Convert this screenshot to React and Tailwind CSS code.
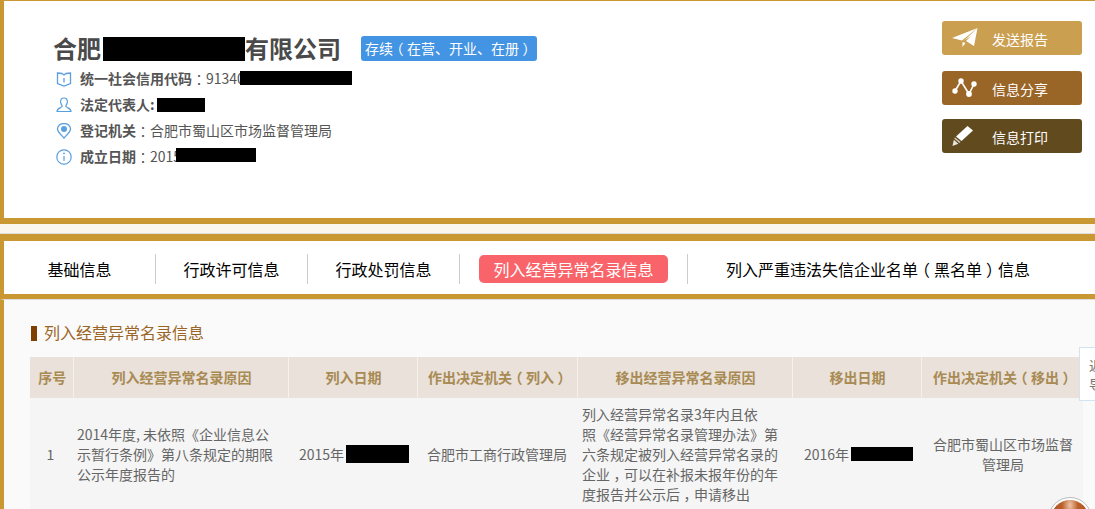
const infoRows = [
  { icon: "book", label: "统一社会信用代码", value: "91340", black: "w-[112px] h-[14px] -ml-[5px] mb-[2px]" },
  { icon: "user", label: "法定代表人:", value: "", black: "w-[48px] h-[14px] ml-[2px]" },
  { icon: "pin", label: "登记机关", value: "合肥市蜀山区市场监督管理局" },
  { icon: "info", label: "成立日期", value: "2015", black: "w-[80px] h-[14px] -ml-[5px] mb-[4px]" },
];

const buttons = [
  { text: "发送报告", color: "bg-[#cb9f50]", icon: "send", margin: "mt-[20px]" },
  { text: "信息分享", color: "bg-[#9a6627]", icon: "share", margin: "mt-[16px]" },
  { text: "信息打印", color: "bg-[#614a1e]", icon: "pencil", margin: "mt-[14px]" },
];

function RowIcon({ name }) {
  if (name === "book") {
    return (
      <svg width="16" height="16" viewBox="0 0 16 16" fill="none" stroke="#5a9fe0" strokeWidth="1.3">
        <path d="M1.5 2 L6 2.5 L8 4 L10 2.5 L14.5 2 V12.5 L8 15 L1.5 12.5 Z" />
        <path d="M8 7 V11.5" />
      </svg>
    );
  }
  if (name === "user") {
    return (
      <svg width="16" height="16" viewBox="0 0 16 16" fill="none" stroke="#5a9fe0" strokeWidth="1.2">
        <path d="M8 1 C5.6 1 4.6 2.8 4.6 4.8 C4.6 6.8 5.8 8 6.2 9 C6.2 10.6 1 11 1 14.5 H15 C15 11 9.8 10.6 9.8 9 C10.2 8 11.4 6.8 11.4 4.8 C11.4 2.8 10.4 1 8 1 Z" />
      </svg>
    );
  }
  if (name === "pin") {
    return (
      <svg width="16" height="16" viewBox="0 0 16 16" fill="none" stroke="#5a9fe0" strokeWidth="1.3">
        <path d="M8 15 C5 11.5 1.5 9 1.5 6 A6.5 5.5 0 0 1 14.5 6 C14.5 9 11 11.5 8 15 Z" />
        <circle cx="8" cy="6" r="3" fill="#5a9fe0" stroke="none" />
      </svg>
    );
  }
  return (
    <svg width="16" height="16" viewBox="0 0 16 16" fill="none" stroke="#5a9fe0" strokeWidth="1.2">
      <circle cx="8" cy="8" r="7.2" />
      <path d="M8 7 V12" />
      <circle cx="8" cy="4.4" r="0.9" fill="#5a9fe0" stroke="none" />
    </svg>
  );
}

function ButtonIcon({ name }) {
  if (name === "send") {
    return (
      <svg width="26" height="20" viewBox="0 0 26 20" fill="white">
        <path d="M0 10 L25.5 0 L10 12.5 Z" />
        <path d="M25.5 0 L22 18 L14 13 L19 8 L12 12.8 Z" />
        <path d="M10.5 14 L13.5 15 L10.5 19 Z" />
      </svg>
    );
  }
  if (name === "share") {
    return (
      <svg width="25" height="20" viewBox="0 0 25 20" fill="white" stroke="white">
        <path d="M3 13 L9 3 L17 16 L22 6" fill="none" strokeWidth="1.6" />
        <circle cx="3" cy="13" r="2.7" stroke="none" />
        <circle cx="9" cy="3" r="2.7" stroke="none" />
        <circle cx="17" cy="16" r="2.9" stroke="none" />
        <circle cx="22" cy="6" r="2.7" stroke="none" />
      </svg>
    );
  }
  return (
    <svg width="22" height="20" viewBox="0 0 22 20" fill="white">
      <path d="M15.5 0 L21 4.5 L9.5 15 L4 10.5 Z" />
      <path d="M3 11.5 L8.5 16 L7.5 17 L2.2 12.5 Z" opacity="0.75" />
      <path d="M1.8 13.7 L6.4 17.8 L0.5 20 Z" opacity="0.85" />
    </svg>
  );
}

function Black({ className }) {
  return <span className={"inline-block bg-black " + className}></span>;
}

// full-width punctuation sits in the middle of its cell in the reference
function Punct({ children }) {
  return <span className="inline-block w-[1em] text-center [font-feature-settings:'halt']">{children}</span>;
}

const thClass = "border-r border-[#f5f2ec] font-bold text-[#a88a52] text-[14px] text-center pl-[2px]";
const tdClass = "text-[#666666] text-[14px] leading-[20px] pt-[6px] pb-[8px]";

export default function App() {
  return (
    <div className="h-screen overflow-hidden bg-[#faf6ee] relative font-['Noto_Sans_CJK_SC','Liberation_Sans',sans-serif]">
      <div className="h-[224px] bg-white border-t border-l-4 border-b-[6px] border-[#c99833] flex justify-between">
        <div className="pl-[49px] pt-[32px]">
          <div className="flex items-center h-[32px]">
            <h1 className="text-[24px] leading-[32px] font-bold text-[#4a4a4a] flex items-center pb-[2px]">
              合肥<Black className="w-[142px] h-[24px] ml-[2px] mt-[2px]" />有限公司
            </h1>
            <span className="ml-[20px] mb-[1px] w-[176px] h-[25px] rounded-[3px] bg-[#4394e3] text-white text-[14px] leading-[25px] text-center">
              存续<Punct>（</Punct>在营、开业、在册<Punct>）</Punct>
            </span>
          </div>
          <div className="mt-[1px] pl-px">
            {infoRows.map((r) => (
              <div key={r.label} className="flex items-center h-[26px] text-[14px] text-[#555555]">
                <span className="w-[26px] pl-[2px] flex">
                  <RowIcon name={r.icon} />
                </span>
                <span className="pb-[2px]">
                  <span className="font-bold">{r.label}</span>
                  {r.icon !== "user" && <Punct>：</Punct>}
                  <span>{r.value}</span>
                </span>
                {r.black && <Black className={r.black} />}
              </div>
            ))}
          </div>
        </div>
        <div className="w-[140px] mr-[13px] flex flex-col">
          {buttons.map((b) => (
            <div key={b.text} className={"h-[34px] rounded-[3px] flex items-center text-white text-[14px] pl-[10px] " + b.color + " " + b.margin}>
              <span className="w-[40px] flex">
                <ButtonIcon name={b.icon} />
              </span>
              <span className="pt-[2px]">{b.text}</span>
            </div>
          ))}
        </div>
      </div>

      <div className="h-[10px] border-b border-[#dddddd]"></div>

      <div className="h-[65px] bg-white border-t-[7px] border-l-4 border-b-[5px] border-[#c99833] pt-[3px] flex items-center text-[16px] text-black">
        <div className="w-[151px] text-center">基础信息</div>
        <div className="w-px h-[30px] bg-[#cccccc]"></div>
        <div className="w-[151px] text-center">行政许可信息</div>
        <div className="w-px h-[30px] bg-[#cccccc]"></div>
        <div className="w-[151px] text-center">行政处罚信息</div>
        <div className="w-px h-[30px] bg-[#cccccc]"></div>
        <div className="ml-[19px] w-[189px] h-[28px] leading-[28px] rounded-[5px] bg-[#f9646a] text-white text-center">
          列入经营异常名录信息
        </div>
        <div className="ml-[19px] w-px h-[30px] bg-[#cccccc]"></div>
        <div className="ml-[38px]">列入严重违法失信企业名单<Punct>（</Punct>黑名单<Punct>）</Punct>信息</div>
      </div>

      <div className="h-[210px] bg-[#fafafa] border-t border-[#dddddd] border-l-4 border-l-[#c99833] pl-[26px] pr-[12px] pt-[24px]">
        <div className="flex items-center h-[18px] text-[16px] text-[#9a6627]">
          <span className="ml-px w-[6px] h-[15px] bg-[#7f3f00] mr-[7px]"></span>
          <span className="pb-[2px]">列入经营异常名录信息</span>
        </div>
        <table className="mt-[15px] w-[1053px] table-fixed border-collapse">
          <colgroup>
            <col className="w-[43px]" />
            <col className="w-[215px]" />
            <col className="w-[129px]" />
            <col className="w-[160px]" />
            <col className="w-[215px]" />
            <col className="w-[129px]" />
            <col className="w-[162px]" />
          </colgroup>
          <thead>
            <tr className="h-[41px] bg-[#e9e1da]">
              <th className={thClass}>序号</th>
              <th className={thClass}>列入经营异常名录原因</th>
              <th className={thClass}>列入日期</th>
              <th className={thClass}>作出决定机关<Punct>（</Punct>列入<Punct>）</Punct></th>
              <th className={thClass}>移出经营异常名录原因</th>
              <th className={thClass}>移出日期</th>
              <th className={thClass}>作出决定机关<Punct>（</Punct>移出<Punct>）</Punct></th>
            </tr>
          </thead>
          <tbody>
            <tr className="bg-[#f5f5f5]">
              <td className={tdClass + " text-center pr-[2px]"}>1</td>
              <td className={tdClass + " pl-[4px] pr-[8px]"}>
                2014年度, 未依照《企业信息公示暂行条例》第八条规定的期限公示年度报告的
              </td>
              <td className={tdClass + " pl-[11px] whitespace-nowrap"}>
                2015年<Black className="w-[63px] h-[18px] ml-[2px] align-[-3px]" />
              </td>
              <td className={tdClass + " text-center"}>合肥市工商行政管理局</td>
              <td className={tdClass + " pl-[5px] whitespace-nowrap"}>
                列入经营异常名录3年内且依<br />
                照《经营异常名录管理办法》第<br />
                六条规定被列入经营异常名录的<br />
                企业<Punct>，</Punct>可以在补报未报年份的年<br />
                度报告并公示后<Punct>，</Punct>申请移出
              </td>
              <td className={tdClass + " pl-[12px] whitespace-nowrap"}>
                2016年<Black className="w-[62px] h-[14px] ml-[2px] align-[-1px]" />
              </td>
              <td className={tdClass + " text-center pl-[11px] pr-[9px]"}>合肥市蜀山区市场监督管理局</td>
            </tr>
          </tbody>
        </table>
      </div>

      <div className="absolute left-[1079px] top-[347px] w-[30px] h-[54px] bg-white border border-[#d5e3ef] pl-[9px] pt-[8px] text-[14px] leading-[19px] text-[#777777]">
        返<br />导
      </div>
      <div className="absolute left-[1048px] top-[497px] w-[44px] h-[44px] rounded-full bg-white border border-[#bbbbbb] p-[2px]">
        <div className="w-full h-full rounded-full bg-[radial-gradient(ellipse_at_50%_14%,#eec4a8_0%,#bb5f2a_30%,#a34b1c_100%)]"></div>
      </div>
    </div>
  );
}
